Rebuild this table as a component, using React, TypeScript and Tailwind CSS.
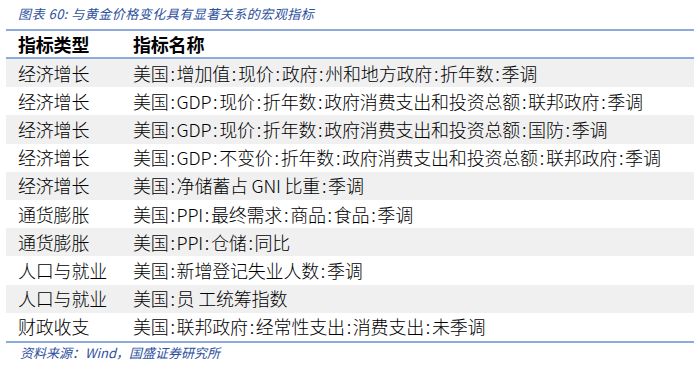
import React from "react";

const rows: [string, string][] = [
  ["经济增长", "美国:增加值:现价:政府:州和地方政府:折年数:季调"],
  ["经济增长", "美国:GDP:现价:折年数:政府消费支出和投资总额:联邦政府:季调"],
  ["经济增长", "美国:GDP:现价:折年数:政府消费支出和投资总额:国防:季调"],
  ["经济增长", "美国:GDP:不变价:折年数:政府消费支出和投资总额:联邦政府:季调"],
  ["经济增长", "美国:净储蓄占 GNI 比重:季调"],
  ["通货膨胀", "美国:PPI:最终需求:商品:食品:季调"],
  ["通货膨胀", "美国:PPI:仓储:同比"],
  ["人口与就业", "美国:新增登记失业人数:季调"],
  ["人口与就业", "美国:员 工统筹指数"],
  ["财政收支", "美国:联邦政府:经常性支出:消费支出:未季调"],
];

// colons in the source are half-width serif colons, wider than the sans ones
const Indicator = ({ text }: { text: string }) => {
  const parts = text.split(":");
  return (
    <>
      {parts.map((p, i) => (
        <React.Fragment key={i}>
          {i > 0 && <span className="inline-block w-[8px] text-center">:</span>}
          {p}
        </React.Fragment>
      ))}
    </>
  );
};

export default function App() {
  return (
    <div className="w-[700px] h-[369px] bg-white text-black font-['Noto_Sans_CJK_SC',sans-serif] overflow-hidden">
      <div className="h-[29px] pl-[18px] pt-[5px] text-[13px] leading-[18px] italic tracking-[0.5px] text-[#2d4f9e]">
        图表 60: 与黄金价格变化具有显著关系的宏观指标
      </div>

      <div className="mx-[6px] border-t-2 border-b-2 border-[#8eaadb]">
        <div className="flex h-[28px] items-center border-b-2 border-[#8eaadb] text-[18px] font-bold tracking-[-0.2px]">
          <div className="w-[127px] pl-[12px]">指标类型</div>
          <div>指标名称</div>
        </div>
        {rows.map(([type, name], i) => (
          <div
            key={i}
            className={`flex h-[28.2px] items-center text-[18px] font-light tracking-[-0.2px] ${
              i % 2 === 0 ? "bg-[#f0f0f0]" : "bg-white"
            }`}
          >
            <div className="w-[127px] pl-[12px] whitespace-nowrap">{type}</div>
            <div className="whitespace-nowrap">
              <Indicator text={name} />
            </div>
          </div>
        ))}
      </div>

      <div className="pl-[20px] pt-[1px] text-[13px] leading-[18px] italic text-[#2d4f9e]">
        资料来源：Wind，国盛证券研究所
      </div>
    </div>
  );
}
